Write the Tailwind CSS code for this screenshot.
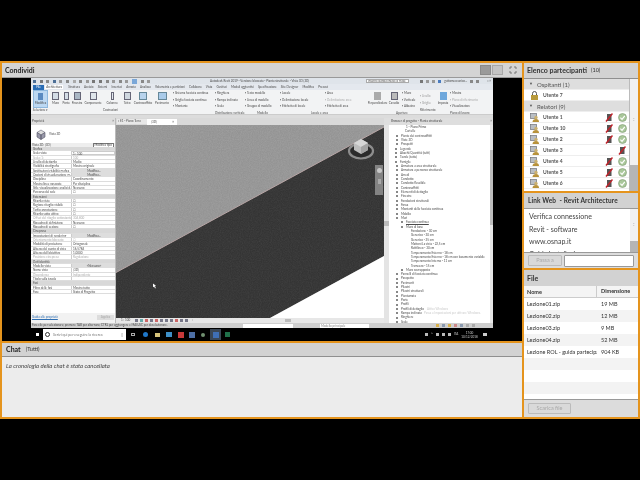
<!DOCTYPE html>
<html><head><meta charset="utf-8"><script src="https://cdn.jsdelivr.net/npm/@tailwindcss/browser@4"></script></head>
<body class="bg-black">
<svg class="absolute w-0 h-0"><defs>
<filter id="n"><feTurbulence type="fractalNoise" baseFrequency="0.9" numOctaves="2" seed="4"/><feColorMatrix values="0 0 0 0 0.5 0 0 0 0 0.5 0 0 0 0 0.5 1.2 0 0 0 -0.35"/></filter>
<symbol id="u" viewBox="0 0 9 9"><rect x="0.5" y="0.5" width="6" height="5" fill="#b9bec4" stroke="#6f7378" stroke-width=".7"/><circle cx="6" cy="4.5" r="1.7" fill="#c9b070"/><path d="M2.5 9c0-2 1.5-3 3.5-3s3 1 3 3z" fill="#b8923a"/></symbol>
<symbol id="m" viewBox="0 0 8 9"><rect x="2" y="1" width="4.5" height="7" fill="#555"/><path d="M1 8.5 7.5 0.5" stroke="#c0232b" stroke-width="1.5"/></symbol>
<symbol id="c" viewBox="0 0 9 9"><circle cx="4.5" cy="4.5" r="4" fill="#a9c79a" stroke="#7e9a72" stroke-width=".6"/><path d="M2.4 4.6 4 6.3 6.8 2.8" stroke="#fff" stroke-width="1.2" fill="none"/></symbol>
</defs></svg>
<div class="w-[640px] h-[480px] overflow-hidden bg-black font-['Lato',sans-serif] text-[#333] blur-[0.35px]">
<div class="mt-[61px] h-[358px] bg-[#e5941d] p-[2px] flex gap-[2px]">
 <div class="w-[520px] flex flex-col gap-[2px]">
  <section class="h-[278px] flex flex-col bg-black">
   <header class="h-[15px] shrink-0 bg-[#d4d4d4] border-b border-[#999] flex items-center pl-[3px] pr-[5px] text-[7px] font-bold text-[#222]">
    <span>Condividi</span>
    <div class="ml-auto flex items-center">
     <span class="w-[11px] h-[10px] bg-[#9a9a9a] border border-[#8a8a8a] mr-[1px]"></span>
     <span class="w-[11px] h-[10px] bg-[#c4c4c4] border border-[#a8a8a8] mr-[6px]"></span>
     <svg width="8" height="8" viewBox="0 0 8 8"><path d="M1 1h2M1 1v2M7 1H5M7 1v2M1 7h2M1 7V5M7 7H5M7 7V5" stroke="#777" fill="none"/></svg>
    </div>
   </header>
   <div class="ml-[29px] w-[462px] h-[250px] bg-[#e9e9e9] flex flex-col text-[3px] text-[#4a4a4a] font-normal blur-[0.3px]">
    <div class="h-[6px] bg-[#dfe4ea] flex items-center pl-[2px] pr-[2px] relative">
     <div class="flex gap-[3.6px] items-center">
      <i class="w-[3px] h-[3px] bg-[#4d6f96]"></i><i class="w-[3px] h-[3px] bg-[#777]"></i><i class="w-[3px] h-[3px] bg-[#888]"></i><i class="w-[3px] h-[3px] bg-[#4d6f96]"></i><i class="w-[3px] h-[3px] bg-[#999]"></i><i class="w-[3px] h-[3px] bg-[#888]"></i><i class="w-[3px] h-[3px] bg-[#aaa]"></i><i class="w-[3px] h-[3px] bg-[#888]"></i><i class="w-[3px] h-[3px] bg-[#999]"></i><i class="w-[3px] h-[3px] bg-[#777]"></i><i class="w-[3px] h-[3px] bg-[#777]"></i><i class="w-[3px] h-[3px] bg-[#888]"></i><i class="w-[3px] h-[3px] bg-[#999]"></i><i class="w-[3px] h-[3px] bg-[#888]"></i><i class="w-[3px] h-[3px] bg-[#999]"></i><i class="w-[5px] h-[5px] bg-[#7aa7d8]"></i><i class="w-[3px] h-[3px] bg-[#888]"></i><i class="w-[3px] h-[3px] bg-[#999]"></i>
     </div>
     <span class="ml-[60px] whitespace-nowrap">Autodesk Revit 2019 - Versione bloccata - Pianta strutturale - Vista 3D (3D)</span>
     <span class="absolute left-[335px] w-[43px] h-[4px] bg-white border-[0.5px] border-[#aaa] pl-[1px] leading-[3px] whitespace-nowrap overflow-hidden">Inserire parola chiave o frase</span>
     <div class="ml-auto flex items-center gap-[3px]"><i class="w-[3px] h-[3px] bg-[#777]"></i><i class="w-[3px] h-[3px] bg-[#999]"></i><i class="w-[3px] h-[3px] bg-[#999]"></i><i class="w-[3px] h-[3px] bg-[#4a7cc0]"></i><span>gattomeccanico...</span><i class="w-[3px] h-[3px] bg-[#888]"></i><i class="w-[3px] h-[3px] bg-[#888]"></i><span class="ml-[3px]">_ ▫ ×</span></div>
    </div>
    <div class="h-[6px] bg-[#e4e8ee] flex items-center pl-[2px] gap-[4.2px] whitespace-nowrap">
     <span class="w-[11px] h-[5px] bg-[#2a6db5] text-white text-center leading-[5px]">File</span>
     <span class="bg-white px-[1px] -ml-[3px]">Architettura</span><span class="ml-[1px]">Struttura</span><span>Acciaio</span><span>Sistemi</span><span>Inserisci</span><span>Annota</span><span>Analizza</span><span>Volumetria e partizioni</span><span>Collabora</span><span>Vista</span><span>Gestisci</span><span>Moduli aggiuntivi</span><span>Specificazione</span><span>Site Designer</span><span>Modifica</span><span>Precast</span>
    </div>
    <div class="h-[25px] bg-[#f2f3f4] flex pl-[2px] border-b border-[#ccc] whitespace-nowrap">
     <div class="w-[15px] flex flex-col items-center">
      <div class="w-[15px] h-[18px] bg-[#bcd8f2] border-[0.5px] border-[#8fb8dd] flex flex-col items-center pt-[2px] gap-[1px]"><i class="w-[5px] h-[7px] bg-[#5a8ac0]"></i><span>Modifica</span></div>
      <span class="mt-auto mb-[2px]">Selezione ▾</span>
     </div>
     <div class="ml-[2px] flex flex-col w-[121px]">
      <div class="flex">
       <div class="w-[11px] flex flex-col items-center pt-[2px] gap-[1px]"><i class="w-[7px] h-[8px] bg-[#d4dde6] border-[0.5px] border-[#667]"></i><span>Muro</span></div>
       <div class="w-[10px] flex flex-col items-center pt-[2px] gap-[1px]"><i class="w-[5px] h-[8px] bg-[#d4dde6] border-[0.5px] border-[#667]"></i><span>Porta</span></div>
       <div class="w-[12px] flex flex-col items-center pt-[2px] gap-[1px]"><i class="w-[7px] h-[8px] bg-[#aab7c4] border-[0.5px] border-[#667]"></i><span>Finestra</span></div>
       <div class="w-[20px] flex flex-col items-center pt-[2px] gap-[1px]"><i class="w-[7px] h-[8px] bg-[#dfe5ea] border-[0.5px] border-[#667]"></i><span>Componente</span></div>
       <div class="w-[18px] flex flex-col items-center pt-[2px] gap-[1px]"><i class="w-[3px] h-[8px] bg-[#e5eaef] border-[0.5px] border-[#667]"></i><span>Colonna</span></div>
       <div class="w-[12px] flex flex-col items-center pt-[2px] gap-[1px]"><i class="w-[7px] h-[8px] bg-[#cfd7df] border-[0.5px] border-[#667]"></i><span>Tetto</span></div>
       <div class="w-[20px] flex flex-col items-center pt-[2px] gap-[1px]"><i class="w-[8px] h-[8px] bg-[#b8d3ec] border-[0.5px] border-[#689]"></i><span>Controsoffitto</span></div>
       <div class="w-[18px] flex flex-col items-center pt-[2px] gap-[1px]"><i class="w-[9px] h-[8px] bg-[#a9cbea] border-[0.5px] border-[#689]"></i><span>Pavimento</span></div>
      </div>
      <span class="mt-auto mb-[2px] text-center">Costruzioni</span>
     </div>
     <div class="ml-[2px] w-[42px] flex flex-col gap-[2px] pt-[1px]"><span>▪ Sistema facciata continua</span><span>▪ Griglia facciata continua</span><span>▪ Montante</span></div>
     <div class="w-[30px] flex flex-col gap-[2px] pt-[1px]"><span>▪ Ringhiera</span><span>▪ Rampa inclinata</span><span>▪ Scala</span><span class="mt-auto mb-[2px]">Distribuzione verticale</span></div>
     <div class="w-[35px] flex flex-col gap-[2px] pt-[1px]"><span>▪ Testo modello</span><span>▪ Linea di modello</span><span>▪ Gruppo di modello</span><span class="mt-auto mb-[2px] text-center">Modello</span></div>
     <div class="w-[45px] flex flex-col gap-[2px] pt-[1px]"><span>▪ Locale</span><span>▪ Delimitazione locale</span><span>▪ Etichetta di locale</span></div>
     <div class="w-[43px] flex flex-col gap-[2px] pt-[1px]"><span>▪ Area</span><span class="text-[#aaa]">▪ Delimitazione aree</span><span>▪ Etichetta di area</span><span class="mt-auto mb-[2px] -ml-[14px]">Locale e area</span></div>
     <div class="w-[19px] flex flex-col items-center pt-[2px] gap-[1px]"><i class="w-[7px] h-[8px] bg-[#aaa]"></i><span>Perpendicolare</span></div>
     <div class="w-[14px] flex flex-col items-center pt-[2px] gap-[1px]"><i class="w-[7px] h-[8px] bg-[#bbb] border-[0.5px] border-[#667]"></i><span>Cavedio</span></div>
     <div class="w-[19px] flex flex-col gap-[2px] pt-[1px] pl-[1px]"><span>▪ Muro</span><span>▪ Verticale</span><span>▪ Abbaino</span><span class="mt-auto mb-[2px] -ml-[6px]">Aperture</span></div>
     <div class="w-[17px] flex flex-col gap-[2px] pt-[4px] text-[#999]"><span>▪ Livello</span><span>▪ Griglia</span><span class="mt-auto mb-[2px] text-[#4a4a4a]">Riferimento</span></div>
     <div class="w-[12px] flex flex-col items-center pt-[2px] gap-[1px]"><i class="w-[7px] h-[8px] bg-[#6fa8dc]"></i><span>Imposta</span></div>
     <div class="pl-[1px] flex flex-col gap-[2px] pt-[1px]"><span>▪ Mostra</span><span class="text-[#aaa]">▪ Piano di riferimento</span><span>▪ Visualizzatore</span><span class="mt-auto mb-[2px]">Piano di lavoro</span></div>
    </div>
    <div class="h-[3px] bg-[#dcdcdc]"></div>
    <div class="h-[205px] flex">
     <aside class="w-[85px] shrink-0 bg-white flex flex-col border-r border-[#bbb]">
      <div class="h-[7px] bg-[#dedede] flex items-center justify-between px-[1px]"><span>Proprietà</span><span>×</span></div>
      <div class="h-[18px] flex items-center gap-[3px] pl-[5px]"><svg width="10" height="11" viewBox="0 0 10 11"><path d="M5 1 9 3.5 5 6 1 3.5z" fill="#ddd" stroke="#667" stroke-width=".6"/><path d="M1 3.5V8l4 2.5V6zM9 3.5V8l-4 2.5V6z" fill="#99a" stroke="#556" stroke-width=".6"/></svg><span>Vista 3D</span></div>
      <div class="h-[4px] flex items-center justify-between pl-[1px] pr-[1px] bg-[#eee]"><span>Vista 3D: {3D}</span><span class="border-[0.5px] border-[#777] bg-white px-[1px] leading-[3px]">Modifica tipo</span></div>
      <div class="h-[148px] flex flex-col [&>div]:h-[4.33px] [&>div]:shrink-0 [&>div]:leading-[4.33px] [&>div]:flex [&>div]:border-b-[0.3px] [&>div]:border-[#ddd] [&>div>span]:w-[40px] [&>div>span]:pl-[2px] [&>div>span]:whitespace-nowrap [&>div>span]:overflow-hidden [&>div>b]:font-normal [&>div>b]:pl-[1px] [&>div>b]:flex-1 [&>div>b]:border-l-[0.3px] [&>div>b]:border-[#ccc]">
       <div class="bg-[#d8d8d8]"><span>Grafica</span></div>
       <div><span>Scala vista</span><b class="border-[0.5px] border-[#555]">1 : 100</b></div>
       <div class="text-[#aaa]"><span>Scala: 1:</span><b>100</b></div>
       <div><span>Livello di dettaglio</span><b>Medio</b></div>
       <div><span>Visibilità stratigrafia</span><b>Mostra originale</b></div>
       <div><span>Sostituzioni visibilità grafica</span><b class="bg-[#ddd] text-center">Modifica...</b></div>
       <div><span>Opzioni di visualizzazione gr...</span><b class="bg-[#ddd] text-center">Modifica...</b></div>
       <div><span>Disciplina</span><b>Coordinamento</b></div>
       <div><span>Mostra linee nascoste</span><b>Per disciplina</b></div>
       <div><span>Stile visualizzazione analisi d...</span><b>Nessuno</b></div>
       <div><span>Percorso del sole</span><b>☐</b></div>
       <div class="bg-[#d8d8d8]"><span>Estensioni</span></div>
       <div><span>Ritaglia vista</span><b>☐</b></div>
       <div><span>Regione ritaglio visibile</span><b>☐</b></div>
       <div><span>Taglio annotazione</span><b>☐</b></div>
       <div><span>Ritaglio sotto attivo</span><b>☐</b></div>
       <div class="text-[#aaa]"><span>Offset del ritaglio sottostante</span><b>304,800</b></div>
       <div><span>Riquadro di definizione</span><b>Nessuno</b></div>
       <div><span>Riquadro di sezione</span><b>☐</b></div>
       <div class="bg-[#d8d8d8]"><span>Cinepresa</span></div>
       <div><span>Impostazioni di rendering</span><b class="bg-[#ddd] text-center">Modifica...</b></div>
       <div class="text-[#aaa]"><span>Orientamento bloccato</span><b>☐</b></div>
       <div><span>Modalità di proiezione</span><b>Ortogonale</b></div>
       <div><span>Altezza del punto di vista</span><b>16,5784</b></div>
       <div><span>Altezza dell'obiettivo</span><b>1,0000</b></div>
       <div class="text-[#aaa]"><span>Posizione cinepresa</span><b>Regolazione</b></div>
       <div class="bg-[#d8d8d8]"><span>Dati identità</span></div>
       <div><span>Modello vista</span><b class="bg-[#ddd] text-center">&lt;Nessuno&gt;</b></div>
       <div><span>Nome vista</span><b>{3D}</b></div>
       <div class="text-[#aaa]"><span>Dipendenza</span><b>Indipendente</b></div>
       <div><span>Titolo sulla tavola</span><b></b></div>
       <div class="bg-[#d8d8d8]"><span>Fasi</span></div>
       <div><span>Filtro delle fasi</span><b>Mostra tutto</b></div>
       <div><span>Fase</span><b>Stato di Progetto</b></div>
      </div>
      <div class="mt-auto h-[10px] flex items-center justify-between px-[1px] pb-[2px] bg-[#f2f2f2]"><span class="text-[#2f6fb3] underline">Guida alle proprietà</span><span class="w-[17px] h-[5px] bg-[#ddd] text-[#aaa] text-center leading-[5px]">Applica</span></div>
     </aside>
     <main class="w-[268px] shrink-0 flex flex-col bg-white">
      <div class="h-[7px] bg-[#d9d9d9] flex items-center pl-[1px]"><span class="w-[30px] h-[5px] bg-[#e8e8e8] leading-[5px] pl-[1px]">▫ E1 - Piano Terra</span><span class="w-[30px] h-[6px] bg-white leading-[6px] pl-[4px] flex justify-between pr-[3px]">{3D}<b>×</b></span></div>
      <div class="h-[193px] relative bg-[#8f8f8f] overflow-hidden">
       <svg width="268" height="193" viewBox="0 0 268 193" class="block">
        <rect width="268" height="193" fill="#949494"/>
        <rect width="268" height="193" filter="url(#n)" opacity=".3"/>
        <path d="M0 147.5 268 2V131L154 193H0z" fill="#343434"/>
        <path d="M0 147.5 268 2V131L154 193H0z" filter="url(#n)" opacity=".12"/>
        <path d="M0 147.5 268 2" stroke="#b8a6a6" stroke-width="1"/>
        <path d="M268 131 154 193H268z" fill="#fff"/>
        <ellipse cx="245" cy="26" rx="12" ry="7.5" fill="#2b2b2b" stroke="#8d8d8d" stroke-width="2.2"/>
        <path d="M245 14 252 18v7l-7 4-7-4v-7z" fill="#bdbdbd"/><path d="M245 14 252 18l-7 4-7-4z" fill="#d6d6d6"/><path d="M245 22v7l7-4v-7z" fill="#a3a3a3"/>
        <path d="M37 158.5l3 2.3-1 .3.8 2-.8.3-.8-2-1.2.8z" fill="#fff"/>
       </svg>
       <div class="absolute left-[259px] top-[40px] w-[8px] h-[30px] bg-[#8c8c8c]/90 flex flex-col items-center gap-[6px] pt-[3px]"><i class="w-[5px] h-[5px] rounded-full bg-[#c8c8c8]"></i><i class="w-[3px] h-[5px] bg-[#aaa]"></i></div>
      </div>
      <div class="h-[5px] bg-[#e7e7e7] flex items-center pl-[5px] gap-[2px] whitespace-nowrap"><span class="mr-[3px]">1 : 100</span><i class="w-[3px] h-[3px] bg-[#778]"></i><i class="w-[3px] h-[3px] bg-[#6aa]"></i><i class="w-[3px] h-[3px] bg-[#c66]"></i><i class="w-[3px] h-[3px] bg-[#778]"></i><i class="w-[3px] h-[3px] bg-[#c66]"></i><i class="w-[3px] h-[3px] bg-[#778]"></i><i class="w-[3px] h-[3px] bg-[#778]"></i><i class="w-[3px] h-[3px] bg-[#778]"></i><i class="w-[3px] h-[3px] bg-[#c66]"></i><i class="w-[3px] h-[3px] bg-[#778]"></i><i class="w-[3px] h-[3px] bg-[#778]"></i><span class="ml-[2px]">‹</span><i class="ml-[90px] w-[6px] h-[3px] bg-[#bbb]"></i></div>
     </main>
     <aside class="w-[109px] shrink-0 bg-white flex flex-col overflow-hidden">
      <div class="h-[7px] shrink-0 bg-[#dedede] flex items-center justify-between pl-[7px] pr-[1px]"><span>Browser di progetto - Pianta strutturale</span><span>×</span></div>
      <div class="flex-1 flex min-h-0">
       <div class="w-[5px] bg-[#e4e4e4] relative"><i class="absolute top-[96px] left-0 w-[5px] h-[5px] bg-[#bbb]"></i></div>
       <div class="flex-1 pl-[6px] whitespace-nowrap [&>div]:h-[4.33px] [&>div]:leading-[4.33px] [&>div]:flex [&>div]:items-center [&>div>i]:w-[2px] [&>div>i]:h-[2px] [&>div>i]:mr-[3px] [&>div>i]:border-[0.5px] [&>div>i]:border-[#888]">
        <div class="pl-[11px]">1 - Piano Primo</div>
        <div class="pl-[10px]">Cartelle</div>
        <div class="pl-[1px]"><i></i>Piante dei controsoffitti</div>
        <div class="pl-[1px]"><i></i>Viste 3D</div>
        <div class="pl-[1px]"><i></i>Prospetti</div>
        <div><i class="bg-[#999]"></i>Legende</div>
        <div><i class="bg-[#999]"></i>Abachi/Quantità (tutti)</div>
        <div><i class="bg-[#999]"></i>Tavole (tutte)</div>
        <div><i class="bg-[#999]"></i>Famiglie</div>
        <div class="pl-[1px]"><i></i>Armatura a area strutturale</div>
        <div class="pl-[1px]"><i></i>Armatura a percorso strutturale</div>
        <div class="pl-[1px]"><i></i>Arredi</div>
        <div class="pl-[1px]"><i></i>Condotto</div>
        <div class="pl-[1px]"><i></i>Condotto flessibile</div>
        <div class="pl-[1px]"><i></i>Controsoffitti</div>
        <div class="pl-[1px]"><i></i>Elementi di dettaglio</div>
        <div class="pl-[1px]"><i></i>Finestre</div>
        <div class="pl-[1px]"><i></i>Fondazioni strutturali</div>
        <div class="pl-[1px]"><i></i>Fossa</div>
        <div class="pl-[1px]"><i></i>Montanti della facciata continua</div>
        <div class="pl-[1px]"><i></i>Mobilio</div>
        <div class="pl-[1px]"><i></i>Muri</div>
        <div class="pl-[6px]"><i></i><u>Facciata continua</u></div>
        <div class="pl-[6px]"><i></i>Muro di base</div>
        <div class="pl-[16px]">Fondazione - 30 cm</div>
        <div class="pl-[16px]">Generico - 30 cm</div>
        <div class="pl-[16px]">Generico - 35 cm</div>
        <div class="pl-[16px]">Mattoni La vista - 22,5 cm</div>
        <div class="pl-[16px]">Rettilineo - 30 cm</div>
        <div class="pl-[16px]">Temperamento Esterno - 18 cm</div>
        <div class="pl-[16px]">Temperamento Esterno - 18 cm con basamento variabile</div>
        <div class="pl-[16px]">Temperamento Interno - 11 cm</div>
        <div class="pl-[16px]">Tramezzo - 15 cm</div>
        <div class="pl-[6px]"><i></i>Muro sovrapposto</div>
        <div class="pl-[1px]"><i></i>Pannelli di facciata continua</div>
        <div class="pl-[1px]"><i></i>Parapetto</div>
        <div class="pl-[1px]"><i></i>Pavimenti</div>
        <div class="pl-[1px]"><i></i>Pilastri</div>
        <div class="pl-[1px]"><i></i>Pilastri strutturali</div>
        <div class="pl-[1px]"><i></i>Piantumata</div>
        <div class="pl-[1px]"><i></i>Porte</div>
        <div class="pl-[1px]"><i></i>Profili</div>
        <div class="pl-[1px] relative"><i></i>Profili di dettaglio<span class="absolute left-[32px] text-[#ccc]">Attiva Windows</span></div>
        <div class="pl-[1px] relative"><i></i>Rampa inclinata<span class="absolute left-[29px] text-[#ccc]">Passa a Impostazioni per attivare Windows.</span></div>
        <div class="pl-[1px]"><i></i>Ringhiere</div>
        <div class="pl-[1px]"><i></i>Scale</div>
       </div>
       <div class="w-[3px] bg-[#e6e6e6] relative"><i class="absolute top-[25px] left-0 w-[3px] h-[75px] bg-[#bdbdbd]"></i></div>
      </div>
     </aside>
    </div>
    <div class="h-[5px] bg-[#cfcfcf] flex items-center whitespace-nowrap pl-[1px] relative">
     <span>Fare clic per selezionare; premere TAB per alternare; CTRL per aggiungere e MAIUSC per deselezionare.</span>
     <span class="absolute left-[212px] w-[50px] h-[4px] bg-white"></span>
     <span class="absolute left-[289px] w-[49px] h-[4px] bg-white leading-[4px] pl-[1px] text-[#888]">Modello principale</span>
     <div class="absolute left-[405px] flex gap-[3px]"><i class="w-[3px] h-[3px] bg-[#d8b04a]"></i><i class="w-[3px] h-[3px] bg-[#8a9ab0]"></i><i class="w-[3px] h-[3px] bg-[#d8b04a]"></i><i class="w-[3px] h-[3px] bg-[#c88]"></i><i class="w-[3px] h-[3px] bg-[#8a9ab0]"></i><i class="w-[3px] h-[3px] bg-[#aaa]"></i><i class="w-[3px] h-[3px] bg-[#aaa]"></i></div>
    </div>
   </div>
   <div class="ml-[29px] w-[462px] h-[13px] bg-black flex items-center text-[3px] text-[#ccc] relative blur-[0.3px]">
    <i class="ml-[5px] w-[3px] h-[3px] bg-white"></i>
    <div class="ml-[4px] w-[83px] h-[11px] bg-white flex items-center pl-[2px] text-[#777] text-[3.6px]"><span class="w-[5px] h-[5px] rounded-full border border-[#333] mr-[3px]"></span>Scrivi qui per eseguire la ricerca<span class="ml-auto mr-[3px]">▯</span></div>
    <i class="ml-[5px] w-[4px] h-[3px] border-[0.5px] border-[#aaa]"></i>
    <i class="ml-[8px] w-[5px] h-[5px] rounded-full bg-[#1f77c9]"></i>
    <i class="ml-[7px] w-[5px] h-[4px] bg-[#d6c37a]"></i>
    <i class="ml-[6px] w-[6px] h-[5px] bg-[#3d8fc7]"></i>
    <i class="ml-[6px] w-[6px] h-[6px] bg-[#c73a3a]"></i>
    <i class="ml-[5px] w-[6px] h-[6px] bg-[#4d6fa5]"></i>
    <i class="ml-[6px] w-[4px] h-[4px] rounded-full bg-[#6f8f6f]"></i>
    <span class="ml-[5px] w-[11px] h-[11px] bg-[#3a4654] flex items-center justify-center"><i class="w-[6px] h-[6px] bg-[#3f6fb5]"></i></span>
    <i class="ml-[4px] w-[5px] h-[5px] bg-[#1f6f4a]"></i>
    <div class="absolute left-[394px] flex items-center gap-[3px]"><i class="w-[3px] h-[3px] bg-[#bbb]"></i><span>^</span><i class="w-[3px] h-[3px] bg-[#bbb]"></i><i class="w-[3px] h-[3px] bg-[#bbb]"></i><i class="w-[3px] h-[3px] bg-[#bbb]"></i><span>ITA</span><span class="leading-[4px] text-center">17:00<br>10/12/2018</span><i class="ml-[2px] w-[4px] h-[3px] bg-[#ccc]"></i></div>
   </div>
  </section>
  <section class="h-[74px] bg-[#ececec] flex flex-col">
   <header class="h-[14px] bg-[#d2d2d2] border-b border-[#8f8f8f] flex items-center pl-[4px] gap-[5px]"><span class="text-[7px] font-bold text-[#222]">Chat</span><span class="text-[5.5px]">(Tutti)</span></header>
   <p class="pl-[4px] pt-[4px] text-[6px] italic text-[#444]">La cronologia della chat è stata cancellata</p>
  </section>
 </div>
 <div class="w-[114px] flex flex-col gap-[2px]">
  <section class="h-[128px] bg-white flex flex-col">
   <header class="h-[16px] shrink-0 bg-[#d2d2d2] border-b border-[#8f8f8f] flex items-center pl-[3px] gap-[4px] text-[7px] font-bold text-[#333]"><span>Elenco partecipanti</span><span class="font-normal text-[5.5px]">(10)</span></header>
   <div class="flex-1 flex min-h-0">
    <div class="w-[106px] text-[5px] font-bold text-[#555] border-r border-[#bbb] whitespace-nowrap overflow-hidden [&>div]:h-[11px] [&>div]:flex [&>div]:items-center [&>div]:border-b-[0.5px] [&>div]:border-[#eee] [&>div>span]:w-[62px] [&>div>span]:pt-[1px]">
     <div class="bg-[#dedede] pl-[5px] text-[6px] font-normal gap-[4px]"><i class="not-italic text-[4px]">▼</i>Ospitanti (1)</div>
     <div class="pl-[6px] gap-[4px]"><svg width="9" height="9" viewBox="0 0 9 9"><path d="M2.5 4V2.5a2 2 0 0 1 4 0V4" stroke="#555" fill="none"/><rect x="1" y="4" width="7" height="5" fill="#b89a3c"/></svg><span>Utente 7</span></div>
     <div class="bg-[#dedede] pl-[5px] text-[6px] font-normal gap-[4px]"><i class="not-italic text-[4px]">▼</i>Relatori (9)</div>
     <div class="pl-[6px]"><svg class="mr-[4px]" width="9" height="9"><use href="#u"/></svg><span>Utente 1</span><svg width="8" height="9"><use href="#m"/></svg><svg class="ml-[5px]" width="9" height="9"><use href="#c"/></svg></div>
     <div class="pl-[6px]"><svg class="mr-[4px]" width="9" height="9"><use href="#u"/></svg><span>Utente 10</span><svg width="8" height="9"><use href="#m"/></svg><svg class="ml-[5px]" width="9" height="9"><use href="#c"/></svg></div>
     <div class="pl-[6px]"><svg class="mr-[4px]" width="9" height="9"><use href="#u"/></svg><span>Utente 2</span><svg width="8" height="9"><use href="#m"/></svg><svg class="ml-[5px]" width="9" height="9"><use href="#c"/></svg></div>
     <div class="pl-[6px]"><svg class="mr-[4px]" width="9" height="9"><use href="#u"/></svg><span class="w-[75px]!">Utente 3</span><svg width="8" height="9"><use href="#m"/></svg></div>
     <div class="pl-[6px]"><svg class="mr-[4px]" width="9" height="9"><use href="#u"/></svg><span>Utente 4</span><svg width="8" height="9"><use href="#m"/></svg><svg class="ml-[5px]" width="9" height="9"><use href="#c"/></svg></div>
     <div class="pl-[6px]"><svg class="mr-[4px]" width="9" height="9"><use href="#u"/></svg><span>Utente 5</span><svg width="8" height="9"><use href="#m"/></svg><svg class="ml-[5px]" width="9" height="9"><use href="#c"/></svg></div>
     <div class="pl-[6px]"><svg class="mr-[4px]" width="9" height="9"><use href="#u"/></svg><span>Utente 6</span><svg width="8" height="9"><use href="#m"/></svg><svg class="ml-[5px]" width="9" height="9"><use href="#c"/></svg></div>
    </div>
    <div class="flex-1 bg-[#f1f1f1] flex flex-col items-center"><span class="mt-[37px] text-[5px] text-[#888]">:</span><i class="mt-auto w-full h-[26px] bg-[#b5b5b5]"></i></div>
   </div>
  </section>
  <section class="h-[75px] bg-[#dcdcdc] flex flex-col">
   <header class="h-[15px] shrink-0 bg-[#d2d2d2] flex items-center pl-[4px] text-[6.5px] font-bold tracking-[0.1px] text-[#333]">Link Web&nbsp; - Revit Architecture</header>
   <div class="h-[45px] shrink-0 flex border-y border-[#999] bg-white">
    <div class="w-[106px] pl-[5px] text-[7px] leading-[12.5px] text-[#444] overflow-hidden pt-[1px]"><div>Verifica connessione</div><div>Revit - software</div><div>www.osnap.it</div><div>Guida installazione</div></div>
    <div class="flex-1 bg-[#f1f1f1] flex flex-col items-center"><span class="mt-[12px] text-[5px] text-[#888]">:</span><i class="mt-auto w-full h-[11px] bg-[#b5b5b5]"></i></div>
   </div>
   <div class="flex-1 flex items-center pl-[4px] gap-[2px]"><button class="w-[34px] h-[11px] border border-[#bbb] rounded-[1px] bg-[#d9d9d9] text-[#aaa] text-[5.5px]">Passa a</button><span class="w-[70px] h-[12px] bg-white border border-[#999] rounded-[1px]"></span></div>
  </section>
  <section class="h-[147px] bg-[#dcdcdc] flex flex-col">
   <header class="h-[16px] shrink-0 bg-[#d2d2d2] flex items-center pl-[3px] text-[7px] font-bold text-[#333]">File</header>
   <div class="h-[114px] shrink-0 bg-white text-[5.5px] text-[#333] border-b border-[#999] [&>div]:h-[12px] [&>div]:flex [&>div]:items-center [&>div]:pl-[3px] [&>div>span]:w-[70px] [&>div>span]:whitespace-nowrap [&>div>span]:overflow-hidden [&>div>b]:font-normal [&>div>b]:pl-[4px]">
    <div class="bg-[#f4f4f4] border-b border-[#ccc] font-bold"><span class="border-r border-[#ccc] leading-[12px]">Nome</span><b class="font-bold! whitespace-nowrap">Dimensione</b></div>
    <div><span>Lezione01.zip</span><b>19 MB</b></div>
    <div class="bg-[#f3f3f3]"><span>Lezione02.zip</span><b>12 MB</b></div>
    <div><span>Lezione03.zip</span><b>9 MB</b></div>
    <div class="bg-[#f3f3f3]"><span>Lezione04.zip</span><b>52 MB</b></div>
    <div><span>Lezione ROL - guida partecipanti</span><b>904 KB</b></div>
    <div class="bg-[#f3f3f3]"></div><div></div><div class="bg-[#f3f3f3]"></div>
   </div>
   <div class="flex-1 flex items-center pl-[4px]"><button class="w-[43px] h-[11px] border border-[#bbb] rounded-[1px] bg-[#d9d9d9] text-[#aaa] text-[5.5px]">Scarica file</button></div>
  </section>
 </div>
</div>
</div>
</body></html>
